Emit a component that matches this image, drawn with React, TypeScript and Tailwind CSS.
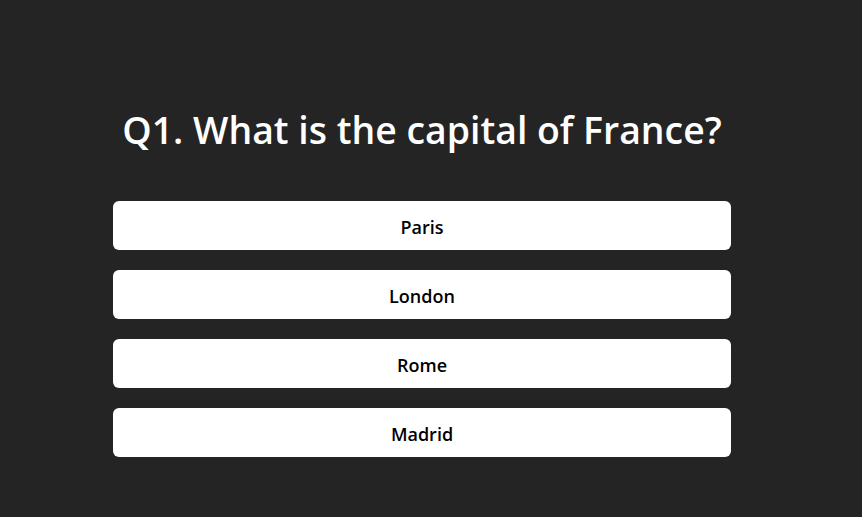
const options = ["Paris", "London", "Rome", "Madrid"];

export default function App() {
  return (
    <div
      className="min-h-[517px] bg-[#242424] pr-[18px] pt-[104px]"
      style={{ fontFamily: '"Open Sans", "Noto Sans", sans-serif' }}
    >
      <div className="mx-auto flex w-[618px] flex-col items-center">
        <h1 className="whitespace-nowrap text-[37.4px] font-semibold leading-[51px] text-white">
          Q1. What is the capital of France?
        </h1>
        <div className="mt-[46px] flex w-full flex-col gap-5">
          {options.map((opt) => (
            <button
              key={opt}
              className="h-[49px] w-full rounded-md bg-white pt-[3px] text-[18px] font-semibold text-black"
            >
              {opt}
            </button>
          ))}
        </div>
      </div>
    </div>
  );
}
